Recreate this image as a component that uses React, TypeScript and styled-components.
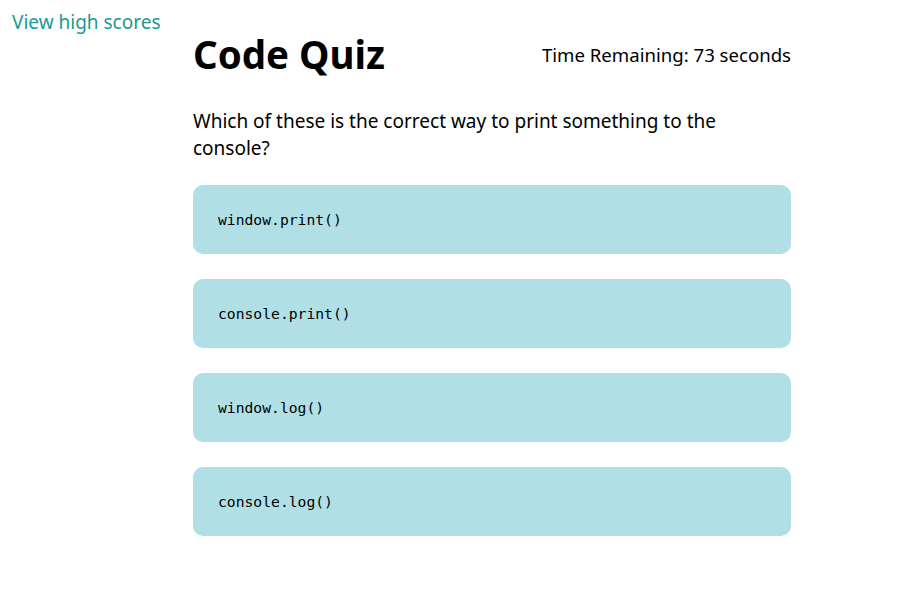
import { createGlobalStyle, styled } from "styled-components";

const GlobalStyle = createGlobalStyle`
  body {
    margin: 0;
    background: #ffffff;
    font-family: "Noto Sans", "Open Sans", sans-serif;
    color: #000000;
  }
`;

const choices = ["window.print()", "console.print()", "window.log()", "console.log()"];

const App = () => {
  return (
    <>
      <GlobalStyle />
      <SPage>
        <SNav>
          <SLink href="#">View high scores</SLink>
        </SNav>
        <SMain>
          <SHeader>
            <STitle>Code Quiz</STitle>
            <STimer>Time Remaining: 73 seconds</STimer>
          </SHeader>
          <SQuestion>Which of these is the correct way to print something to the console?</SQuestion>
          <SChoices>
            {choices.map((c) => (
              <SChoice key={c}>{c}</SChoice>
            ))}
          </SChoices>
        </SMain>
      </SPage>
    </>
  );
};

export default App;

const SPage = styled.div`
  display: grid;
  grid-template-columns: 193px 598px;
  min-height: 607px;
`;

const SNav = styled.nav`
  padding: 9px 0 0 12px;
`;

const SLink = styled.a`
  font-size: 19px;
  color: #1a9a94;
  text-decoration: none;
  white-space: nowrap;
`;

const SMain = styled.main`
  display: flex;
  flex-direction: column;
`;

const SHeader = styled.header`
  display: flex;
  justify-content: space-between;
  align-items: center;
  padding-top: 28px;
`;

const STitle = styled.h1`
  margin: 0;
  font-size: 38.5px;
  font-weight: 700;
  line-height: 52px;
`;

const STimer = styled.div`
  font-size: 18.6px;
`;

const SQuestion = styled.p`
  margin: 28px 0 0;
  font-size: 19px;
  line-height: 27px;
  padding-right: 70px;
`;

const SChoices = styled.div`
  display: flex;
  flex-direction: column;
  gap: 25px;
  margin-top: 23px;
`;

const SChoice = styled.button`
  height: 69px;
  padding: 0 25px;
  border: none;
  border-radius: 10px;
  background: #b0e0e6;
  text-align: left;
  font-family: "DejaVu Sans Mono", "Liberation Mono", monospace;
  font-size: 14.7px;
  color: #000000;
  cursor: pointer;
`;
